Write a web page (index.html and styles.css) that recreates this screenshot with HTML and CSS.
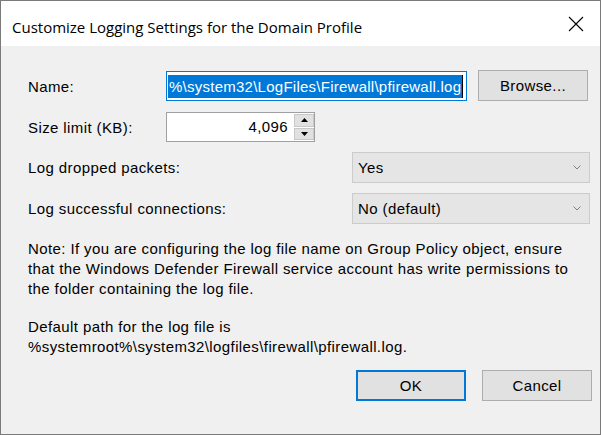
FILE: index.html
```html
<!DOCTYPE html>
<html>
<head>
  <title>Customize Logging Settings for the Domain Profile</title>
  <link rel="stylesheet" href="styles.css">
</head>
<body>
  <div class="dialog">
    <div class="titlebar">
      <span class="title">Customize Logging Settings for the Domain Profile</span>
      <svg class="close" width="16" height="16" viewBox="0 0 16 16">
        <path d="M1 1 L15 15 M15 1 L1 15" stroke="#000" stroke-width="1.1" fill="none"/>
      </svg>
    </div>

    <div class="content">
      <div class="row row-name">
        <label class="label">Name:</label>
        <div class="textbox focused">
          <span class="selected">%\system32\LogFiles\Firewall\pfirewall.log</span><span class="caret"></span>
        </div>
        <button class="btn browse">Browse...</button>
      </div>

      <div class="row row-size">
        <label class="label">Size limit (KB):</label>
        <div class="spin">
          <div class="spin-value">4,096</div>
          <div class="spin-buttons">
            <div class="spin-btn"><svg width="7" height="4" viewBox="0 0 7 4"><path d="M3.5 0 L7 4 L0 4 Z" fill="#000"/></svg></div>
            <div class="spin-btn"><svg width="7" height="4" viewBox="0 0 7 4"><path d="M0 0 L7 0 L3.5 4 Z" fill="#000"/></svg></div>
          </div>
        </div>
      </div>

      <div class="row row-combo">
        <label class="label">Log dropped packets:</label>
        <div class="combo">
          <span>Yes</span>
          <svg width="8" height="5" viewBox="0 0 8 5"><path d="M0.5 0.5 L4 4 L7.5 0.5" stroke="#808080" stroke-width="1" fill="none"/></svg>
        </div>
      </div>

      <div class="row row-combo">
        <label class="label">Log successful connections:</label>
        <div class="combo">
          <span>No (default)</span>
          <svg width="8" height="5" viewBox="0 0 8 5"><path d="M0.5 0.5 L4 4 L7.5 0.5" stroke="#808080" stroke-width="1" fill="none"/></svg>
        </div>
      </div>

      <p class="note">Note: If you are configuring the log file name on Group Policy object, ensure<br>
        that the Windows Defender Firewall service account has write permissions to<br>
        the folder containing the log file.</p>

      <p class="note">Default path for the log file is<br>
        %systemroot%\system32\logfiles\firewall\pfirewall.log.</p>

      <div class="actions">
        <button class="btn ok">OK</button>
        <button class="btn">Cancel</button>
      </div>
    </div>
  </div>
</body>
</html>
```

FILE: styles.css
```css
html, body {
  margin: 0;
  padding: 0;
}
body {
  width: 601px;
  height: 435px;
  overflow: hidden;
  font-family: "Liberation Sans", Arial, sans-serif;
  font-size: 15px;
  letter-spacing: 0.4px;
  color: #000;
}
.dialog {
  width: 601px;
  height: 435px;
  box-sizing: border-box;
  border: 1px solid #7a7a7a;
  display: flex;
  flex-direction: column;
  background: #f0f0f0;
}
.titlebar {
  height: 45px;
  background: #fff;
  display: flex;
  align-items: center;
  justify-content: space-between;
  padding: 0 16px 0 11px;
  flex-shrink: 0;
  letter-spacing: 0;
}
.title {
  font-family: "Open Sans", "Noto Sans", sans-serif;
  font-size: 15px;
  margin-top: 6px;
}
.close {
  margin-top: 1px;
}
.content {
  flex: 1;
  padding: 24px 0 0 27px;
  display: flex;
  flex-direction: column;
}
.row {
  display: flex;
  align-items: center;
}
.label {
  width: 138px;
  flex-shrink: 0;
  white-space: nowrap;
}
.row-name {
  height: 32px;
}
.textbox {
  width: 301px;
  height: 30px;
  box-sizing: border-box;
  background: #fff;
  border: 1px solid #7a7a7a;
  display: flex;
  align-items: center;
  justify-content: flex-end;
  overflow: hidden;
  padding: 0 3px 0 1px;
  white-space: nowrap;
  letter-spacing: 0.25px;
}
.textbox.focused {
  border-color: #0078d7;
}
.selected {
  background: #0078d7;
  color: #fff;
  line-height: 23px;
  padding: 0 1px;
}
.caret {
  width: 1px;
  height: 23px;
  background: #000;
}
.btn {
  font-family: "Liberation Sans", Arial, sans-serif;
  font-size: 15px;
  letter-spacing: 0.4px;
  color: #000;
  background: #e1e1e1;
  border: 1px solid #adadad;
  width: 110px;
  height: 31px;
  padding: 0;
}
.browse {
  margin-left: 11px;
  margin-top: -2px;
}
.row-size {
  margin-top: 10px;
  height: 30px;
}
.spin {
  display: flex;
  width: 149px;
  height: 30px;
  box-sizing: border-box;
  border: 1px solid #a0a0a0;
  background: #fff;
}
.spin-value {
  flex: 1;
  text-align: right;
  padding-right: 6px;
  line-height: 28px;
}
.spin-buttons {
  width: 20px;
  display: flex;
  flex-direction: column;
  gap: 1px;
  padding: 1px 0;
  background: #fff;
}
.spin-btn {
  flex: 1;
  background: #e1e1e1;
  border: 1px solid #c8c8c8;
  display: flex;
  align-items: center;
  justify-content: center;
}
.spin-btn svg {
  display: block;
}
.row-combo {
  height: 32px;
  margin-top: 9px;
}
.combo {
  margin-left: 186px;
  width: 238px;
  height: 31px;
  box-sizing: border-box;
  background: #e5e5e5;
  border: 1px solid #cccccc;
  display: flex;
  align-items: center;
  justify-content: space-between;
  padding: 0 8px 0 5px;
}
.note {
  margin: 0;
  line-height: 20px;
  white-space: nowrap;
}
.row-combo + .note {
  margin-top: 15px;
}
.note + .note {
  margin-top: 18px;
}
.actions {
  display: flex;
  justify-content: flex-end;
  gap: 16px;
  padding-right: 8px;
  margin-top: 13px;
}
.ok {
  border: 2px solid #0078d7;
}
```
